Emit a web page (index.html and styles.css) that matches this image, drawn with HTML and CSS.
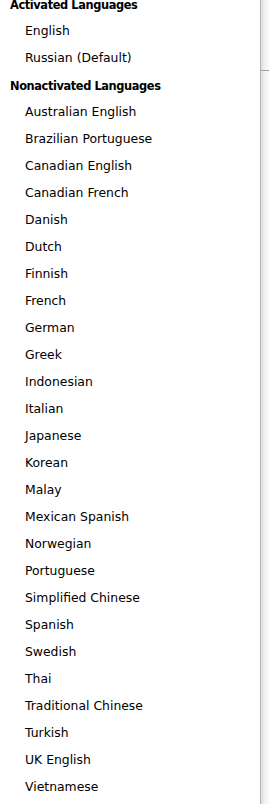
FILE: index.html
```html
<!DOCTYPE html>
<html>
<head>
<meta charset="utf-8">
<link rel="stylesheet" href="styles.css">
</head>
<body>
<div class="frame">
  <ul class="list">
    <li class="head">Activated Languages</li>
    <li class="item">English</li>
    <li class="item">Russian (Default)</li>
    <li class="head">Nonactivated Languages</li>
    <li class="item">Australian English</li>
    <li class="item">Brazilian Portuguese</li>
    <li class="item">Canadian English</li>
    <li class="item">Canadian French</li>
    <li class="item">Danish</li>
    <li class="item">Dutch</li>
    <li class="item">Finnish</li>
    <li class="item">French</li>
    <li class="item">German</li>
    <li class="item">Greek</li>
    <li class="item">Indonesian</li>
    <li class="item">Italian</li>
    <li class="item">Japanese</li>
    <li class="item">Korean</li>
    <li class="item">Malay</li>
    <li class="item">Mexican Spanish</li>
    <li class="item">Norwegian</li>
    <li class="item">Portuguese</li>
    <li class="item">Simplified Chinese</li>
    <li class="item">Spanish</li>
    <li class="item">Swedish</li>
    <li class="item">Thai</li>
    <li class="item">Traditional Chinese</li>
    <li class="item">Turkish</li>
    <li class="item">UK English</li>
    <li class="item">Vietnamese</li>
  </ul>
  <div class="edge"><div class="tick"></div></div>
</div>
</body>
</html>
```
FILE: styles.css
```css
html, body {
  margin: 0;
  padding: 0;
  background: #ffffff;
  overflow: hidden;
}
.frame {
  display: flex;
  width: 269px;
  height: 804px;
  overflow: hidden;
}
.list {
  list-style: none;
  margin: -10px 0 0 0;
  padding: 0;
  width: 260px;
  font-family: "DejaVu Sans", sans-serif;
  font-size: 12.4px;
  color: #000;
}
.list li {
  height: 27px;
  line-height: 27px;
  white-space: nowrap;
}
.list li.head {
  padding-left: 10px;
  padding-top: 3px;
  height: 24px;
  line-height: 24px;
  font-weight: bold;
  font-size: 11.4px;
  letter-spacing: -0.4px;
}
.item {
  padding-left: 25px;
}
.edge {
  width: 8px;
  border-left: 1px solid #b4b4b4;
  background: linear-gradient(to right, #dedede, #f2f2f2 50%, #fafafa);
  display: flex;
  flex-direction: column;
}
.tick {
  margin-top: 70px;
  height: 1px;
  background: #9aa4b2;
}
```
